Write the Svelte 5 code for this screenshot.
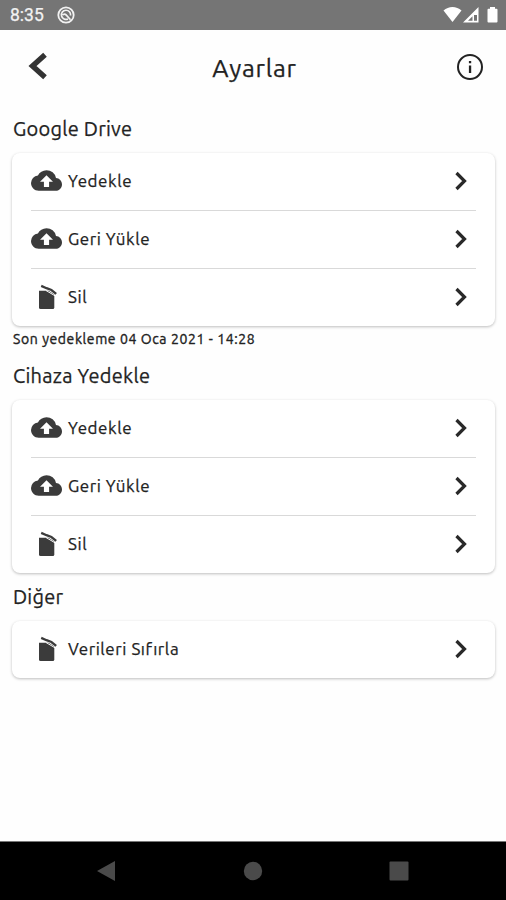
<script>
  const sections = [
    {
      title: 'Google Drive',
      rows: [
        { label: 'Yedekle', icon: 'cloud' },
        { label: 'Geri Yükle', icon: 'cloud' },
        { label: 'Sil', icon: 'trash' }
      ],
      note: 'Son yedekleme 04 Oca 2021 - 14:28'
    },
    {
      title: 'Cihaza Yedekle',
      rows: [
        { label: 'Yedekle', icon: 'cloud' },
        { label: 'Geri Yükle', icon: 'cloud' },
        { label: 'Sil', icon: 'trash' }
      ]
    },
    {
      title: 'Diğer',
      rows: [{ label: 'Verileri Sıfırla', icon: 'trash' }]
    }
  ];
</script>

<div class="screen">
  <div class="status-bar">
    <span class="time">8:35</span>
    <svg class="app-icon" width="18" height="18" viewBox="0 0 18 18" fill="none" stroke="#f2f2f2">
      <circle cx="9" cy="9" r="7.7" stroke-width="1.8" />
      <path d="M11 13A4.600 4.600 0 1 1 13.600 9.500M5.800 9.200c1-1.800 2.500-1.200 3.300-.3l4.400 4.800" stroke-width="1.700" />
    </svg>
    <svg class="signals" width="56" height="18" viewBox="0 0 56 18" fill="#fff">
      <path d="M.5 4.500C5.500-.2 13.500-.2 18.500 4.500L9.500 16z" />
      <path fill-rule="evenodd" d="M20 16.500L35.500 1v15.500zM25 14.800h4.500v-4.500zM31 9v5.800h3V9z" />
      <path d="M47 1h5v1.800h1.500q1 0 1 1V15.500q0 1-1 1h-8q-1 0-1-1V3.800q0-1 1-1H47z" />
    </svg>
  </div>

  <header>
    <button class="back" aria-label="Geri">
      <svg width="20" height="28" viewBox="0 0 20 28" fill="none" stroke="#333" stroke-width="5.4">
        <path d="M17 2.700L4.500 14L17 25.300" />
      </svg>
    </button>
    <h1>Ayarlar</h1>
    <button class="info" aria-label="Bilgi">
      <svg width="28" height="28" viewBox="0 0 28 28">
        <circle cx="14" cy="14" r="12" fill="none" stroke="#222" stroke-width="2" />
        <path d="M12.900 8h2.300v2.200h-2.300zM12.900 12.500h2.300v7.500h-2.300z" fill="#222" />
      </svg>
    </button>
  </header>

  <main>
    {#each sections as section}
      <h2>{section.title}</h2>
      <ul class="card">
        {#each section.rows as row}
          <li>
            <span class="icon">
              {#if row.icon === 'cloud'}
                <svg width="31" height="31" viewBox="0 0 24 24" fill="#3b3b3b">
                  <path d="M19.350 10.040A7.490 7.490 0 0 0 12 4C9.110 4 6.600 5.640 5.350 8.040A5.994 5.994 0 0 0 0 14c0 3.310 2.690 6 6 6h13c2.760 0 5-2.240 5-5 0-2.640-2.050-4.780-4.650-4.960zM14 13v4h-4v-4H7l5-5 5 5h-3z" />
                </svg>
              {:else}
                <svg class="trash" width="20" height="26" viewBox="0 0 20 26" fill="#3b3b3b">
                  <path d="M1 6.800H10.500L16.300 10.500V23.500q0 1.500-1.500 1.500H2.500Q1 25 1 23.500z" />
                  <path d="M3.200 1.900L8.500 4.200L13.400 6L18.200 9.800" fill="none" stroke="#3b3b3b" stroke-width="2.300" />
                  <path d="M8 6.500L17 11.800" fill="none" stroke="#fff" stroke-width="1" />
                </svg>
              {/if}
            </span>
            <span class="label">{row.label}</span>
            <svg class="chevron" width="14" height="20" viewBox="0 0 14 20" fill="none" stroke="#292929" stroke-width="3.200">
              <path d="M2.500 2l8 8-8 8" />
            </svg>
          </li>
        {/each}
      </ul>
      {#if section.note}
        <p class="note">{section.note}</p>
      {/if}
    {/each}
  </main>

  <nav>
    <svg width="20" height="22" viewBox="0 0 20 22"><path d="M1 11L19 1v20z" fill="#4a4a4a" /></svg>
    <svg width="20" height="20" viewBox="0 0 20 20"><circle cx="10" cy="10" r="9.200" fill="#4a4a4a" /></svg>
    <svg width="20" height="20" viewBox="0 0 20 20"><rect x=".5" y=".5" width="19" height="19" rx="1" fill="#4a4a4a" /></svg>
  </nav>
</div>

<style>
  :global(body) {
    margin: 0;
    background: #fff;
  }

  .screen {
    display: flex;
    flex-direction: column;
    height: 900px;
    font-family: Ubuntu, 'Noto Sans', sans-serif;
    color: #222;
    background: #fefefe;
    -webkit-text-stroke: 0.25px;
  }

  .status-bar {
    display: flex;
    align-items: center;
    height: 30px;
    box-sizing: border-box;
    padding: 0 7px 0 10px;
    background: #757575;
  }

  .time {
    width: 47px;
    font: 17.5px Roboto, sans-serif;
    color: #f2f2f2;
  }

  .signals {
    margin-left: auto;
  }

  header {
    display: flex;
    align-items: center;
    justify-content: space-between;
    height: 75px;
    box-sizing: border-box;
    padding: 0 22px 2px 28px;
  }

  button {
    display: flex;
    padding: 0;
    border: 0;
    background: none;
  }

  .back,
  .info {
    width: 28px;
  }

  .back {
    padding-bottom: 2px;
  }

  h1 {
    margin: 2px 3px 0 0;
    font-size: 25px;
    font-weight: 400;
    letter-spacing: 0.7px;
  }

  main {
    flex: 1;
    padding: 0 11px 0 12px;
  }

  h2 {
    height: 48px;
    margin: 0 1px;
    font-size: 20px;
    font-weight: 400;
    line-height: 48px;
    letter-spacing: 0.25px;
  }

  .card {
    margin: 0;
    padding: 0 19px;
    list-style: none;
    border-radius: 8px;
    background: #fff;
    box-shadow: 0 1px 3px rgba(0, 0, 0, 0.26);
  }

  li {
    display: flex;
    align-items: center;
    height: 57px;
    box-sizing: border-box;
    padding-bottom: 2px;
  }

  li + li {
    height: 58px;
    border-top: 1px solid #d9d9d9;
  }

  .icon {
    display: flex;
    justify-content: center;
    width: 31px;
    margin-right: 6px;
  }

  .trash {
    margin-left: 2px;
  }

  .label {
    flex: 1;
    font-size: 17px;
    letter-spacing: 0.55px;
  }

  .chevron {
    margin-right: 8px;
  }

  .note {
    height: 26px;
    margin: 0;
    padding-left: 1px;
    font-size: 14px;
    line-height: 26px;
    letter-spacing: 0.6px;
    -webkit-text-stroke: 0.35px;
  }

  nav {
    display: flex;
    align-items: center;
    justify-content: space-between;
    height: 59px;
    box-sizing: border-box;
    padding: 0 97px 0 96px;
    border-top: 1px solid #777;
    background: #000;
  }
</style>
